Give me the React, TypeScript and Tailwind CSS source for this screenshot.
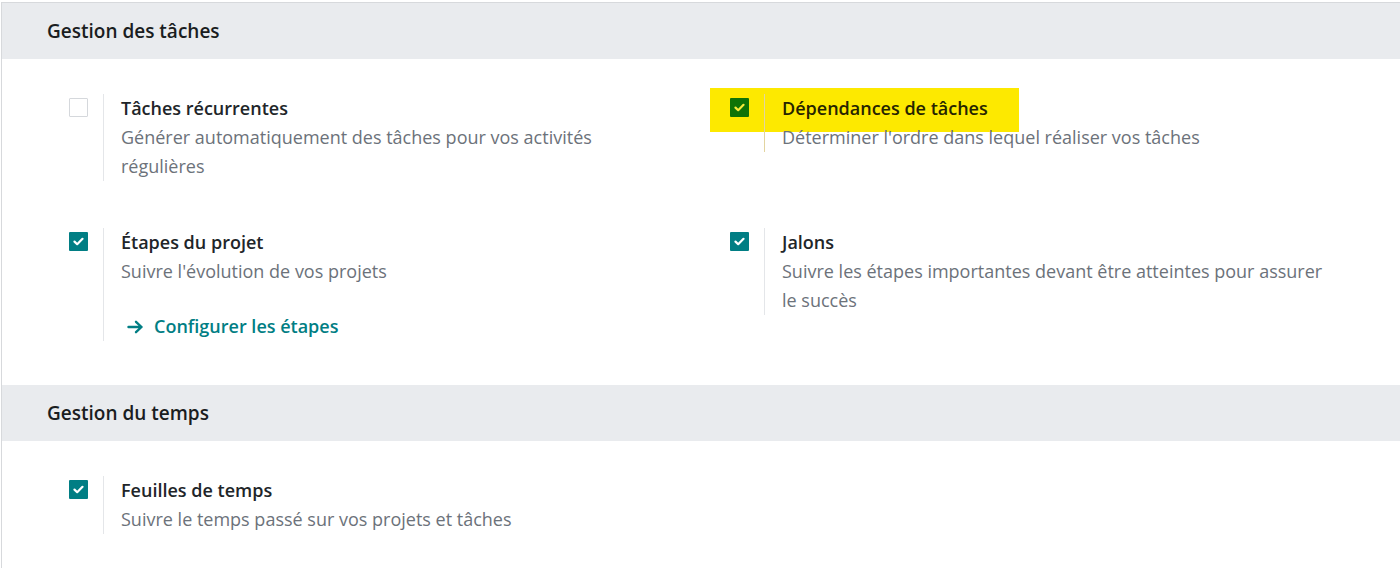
import React from "react";

const font = { fontFamily: '"Open Sans", "Noto Sans", sans-serif' };

function Check({ checked, green }: { checked: boolean; green?: boolean }) {
  if (!checked) {
    return <div className="w-[19px] h-[19px] shrink-0 border border-[#d5d8dc] bg-white rounded-[1px]" />;
  }
  return (
    <div
      className={`w-[19px] h-[19px] shrink-0 flex items-center justify-center rounded-[1px] ${
        green ? "bg-[#0f7306]" : "bg-[#017e84]"
      }`}
    >
      <svg width="11" height="9" viewBox="0 0 11 9">
        <path
          d="M1.5 4.6 L4.2 7.2 L9.5 1.8"
          fill="none"
          stroke={green ? "#f7ea3a" : "#ffffff"}
          strokeWidth="2.2"
          strokeLinecap="round"
          strokeLinejoin="round"
        />
      </svg>
    </div>
  );
}

function Setting({
  title,
  desc,
  checked,
  highlight,
  children,
}: {
  title: string;
  desc: string;
  checked: boolean;
  highlight?: boolean;
  children?: React.ReactNode;
}) {
  return (
    <div className="relative flex">
      {highlight && <div className="absolute left-[-20px] top-[-6px] w-[309px] h-[44px] bg-[#fde900]" />}
      <div className="relative pt-[4px] pr-[15px]">
        <Check checked={checked} green={highlight} />
      </div>
      <div
        className={`relative border-l pl-[17px] ${
          highlight ? "border-[#e2d4a0]" : "border-[#e4e6e9]"
        }`}
      >
        <div className="w-[545px]">
          <div
            className={`text-[18px] leading-[29px] font-semibold ${
              highlight ? "text-[#262400]" : "text-[#212529]"
            }`}
          >
            {title}
          </div>
          <div className="text-[18px] leading-[29px] text-[#6c727a]">{desc}</div>
          {children}
        </div>
      </div>
    </div>
  );
}

function Header({ title }: { title: string }) {
  return (
    <div className="h-[56px] bg-[#e9ebee] flex items-center pl-[45px]">
      <span className="text-[19px] font-semibold text-[#1a1d21]">{title}</span>
    </div>
  );
}

export default function App() {
  return (
    <div className="w-[1400px] h-[568px] bg-white overflow-hidden pt-[2px]" style={font}>
      <div className="ml-[1px] border-l border-t border-[#d7d9dc] h-full">
        <Header title="Gestion des tâches" />
        <div className="grid grid-cols-[661px_1fr] items-start pl-[67px] pt-[35px] pb-[44px] gap-y-[47px]">
          <Setting
            title="Tâches récurrentes"
            desc="Générer automatiquement des tâches pour vos activités régulières"
            checked={false}
          />
          <Setting
            title="Dépendances de tâches"
            desc="Déterminer l'ordre dans lequel réaliser vos tâches"
            checked
            highlight
          />
          <Setting title="Étapes du projet" desc="Suivre l'évolution de vos projets" checked>
            <div className="mt-[26px] text-[18px] leading-[29px] font-semibold text-[#017e84] flex items-center">
              <svg width="17" height="14" viewBox="0 0 17 14" className="ml-[6px] mr-[10px]">
                <path
                  d="M1.5 7 H14.5 M9 1.8 L14.5 7 L9 12.2"
                  fill="none"
                  stroke="#017e84"
                  strokeWidth="2.4"
                  strokeLinecap="round"
                  strokeLinejoin="round"
                />
              </svg>
              <span>Configurer les étapes</span>
            </div>
          </Setting>
          <Setting
            title="Jalons"
            desc="Suivre les étapes importantes devant être atteintes pour assurer le succès"
            checked
          />
        </div>
        <Header title="Gestion du temps" />
        <div className="grid grid-cols-[661px_1fr] items-start pl-[67px] pt-[35px]">
          <Setting title="Feuilles de temps" desc="Suivre le temps passé sur vos projets et tâches" checked />
        </div>
      </div>
    </div>
  );
}
